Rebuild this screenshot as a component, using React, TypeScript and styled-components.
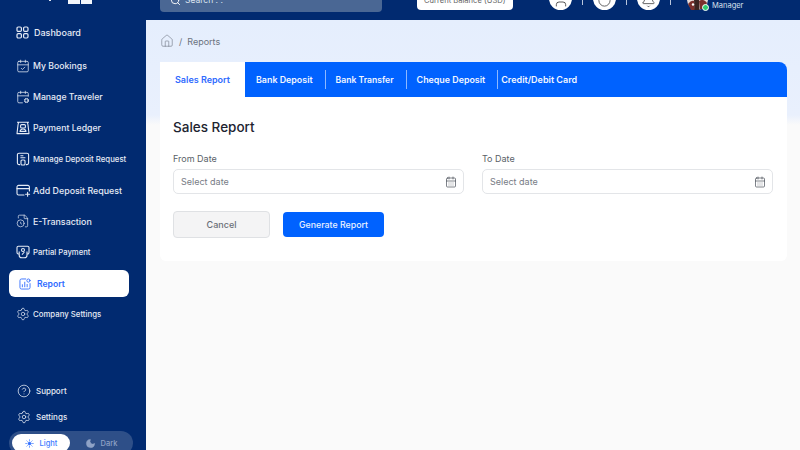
import React from "react";
import styled, { createGlobalStyle } from "styled-components";
import {
  Bell,
  CalendarCheck,
  CalendarCog,
  CalendarDays,
  CircleHelp,
  FileClock,
  Home,
  Moon,
  Search,
  Settings,
  Sun,
  User,
  RotateCw,
} from "lucide-react";

const navy = "#012a70";
const blue = "#0062ff";

const GlobalStyle = createGlobalStyle`
  html, body { margin: 0; padding: 0; height: 450px; overflow: hidden; }
  body { font-family: Inter, "Liberation Sans", sans-serif; background: #fafafa; }
  * { box-sizing: border-box; }
`;

const DashboardIcon = () => (
  <svg width="13" height="13" viewBox="0 0 13 13" fill="none" stroke="currentColor" strokeWidth="1.2">
    <rect x="1" y="1" width="4.4" height="4.4" rx="1.2" />
    <rect x="7.6" y="1" width="4.4" height="4.4" rx="1.2" />
    <rect x="1" y="7.6" width="4.4" height="4.4" rx="1.2" />
    <rect x="7.6" y="7.6" width="4.4" height="4.4" rx="1.2" />
  </svg>
);

const LedgerIcon = () => (
  <svg width="14" height="14" viewBox="0 0 14 14" fill="none" stroke="currentColor" strokeWidth="1.1" strokeLinejoin="round">
    <path d="M1 1.2h12M2.6 1.2 2 4 1 12.6h12L12 4l-.6-2.8" />
    <rect x="4.6" y="3.6" width="4.8" height="3.4" rx="1" />
    <path d="M4 10.4c.4-1.8 1.6-2.4 3-2.4s2.6.6 3 2.4z" />
  </svg>
);

const DepositIcon = () => (
  <svg width="14" height="14" viewBox="0 0 14 14" fill="none" stroke="currentColor" strokeWidth="1.1" strokeLinejoin="round">
    <path d="M4 12.6H3a1.6 1.6 0 0 1-1.6-1.6V2.8A1.6 1.6 0 0 1 3 1.2h8a1.6 1.6 0 0 1 1.6 1.6V11a1.6 1.6 0 0 1-1.6 1.6h-1" />
    <path d="M4.4 3.8h3M4.4 5.8h5" />
    <rect x="5" y="8" width="4" height="5" rx="1" />
  </svg>
);

const AddCardIcon = () => (
  <svg width="15" height="13" viewBox="0 0 15 13" fill="none" stroke="currentColor" strokeWidth="1.1" strokeLinecap="round">
    <path d="M8 11H2.6A1.6 1.6 0 0 1 1 9.4V3a1.6 1.6 0 0 1 1.6-1.6h9.2A1.6 1.6 0 0 1 13.4 3v4" />
    <path d="M1 4.6h12.4M11.6 8.2v4M9.6 10.2h4" />
  </svg>
);

const PartialIcon = () => (
  <svg width="14" height="14" viewBox="0 0 14 14" fill="none" stroke="currentColor" strokeWidth="1.1" strokeLinejoin="round">
    <path d="M3 9H2.4A1.4 1.4 0 0 1 1 7.6V2.6a1.4 1.4 0 0 1 1.4-1.4h9.2A1.4 1.4 0 0 1 13 2.6v5A1.4 1.4 0 0 1 11.6 9H11" />
    <path d="M3.2 6.6v3.6c0 1.5 1.2 2.6 2.6 2.6h2.6c1.4 0 2.6-1.1 2.6-2.6V6.6" />
    <circle cx="7" cy="5" r="1.5" />
    <path d="M6 9.6 8.4 7" />
  </svg>
);

const ReportIcon = () => (
  <svg width="12" height="12" viewBox="0 0 15 15" fill="none" stroke="currentColor" strokeWidth="1.1" strokeLinecap="round">
    <path d="M8.4 1.2H3.2a2 2 0 0 0-2 2v8.6a2 2 0 0 0 2 2h8.6a2 2 0 0 0 2-2V7" />
    <circle cx="11.8" cy="3.2" r="2" />
    <path d="M4.2 11V8.4M7.2 11V5.2M10.2 11V8" />
  </svg>
);

const AvatarPhoto = () => (
  <svg width="21" height="21" viewBox="0 0 21 21">
    <circle cx="10.5" cy="10.5" r="10.5" fill="#e9dcd8" />
    <path d="M1 15c2-3 5-4 6-3l1 9H4zM12 12c3-2 6-1 8 2l-3 6h-4z" fill="#7a2f2c" />
    <path d="M7 11c1-2 4-2 5 0l.5 10h-5z" fill="#3a2422" />
    <circle cx="6" cy="15.5" r="1.2" fill="#fff" />
  </svg>
);

const Page = styled.div`
  display: grid;
  grid-template-columns: 146px 1fr;
  grid-template-rows: 20px 1fr;
  width: 800px;
  height: 450px;
  overflow: hidden;
`;

const Sidebar = styled.aside`
  grid-row: 1 / 3;
  display: flex;
  flex-direction: column;
  background: ${navy};
  color: #e6ebf5;
  overflow: hidden;
`;

const LogoRow = styled.div`
  display: flex;
  align-items: flex-start;
  height: 17px;
  padding-left: 49px;
  gap: 17px;
`;

const LogoDot = styled.span`
  width: 2px;
  height: 1px;
  background: #dfe6f3;
`;

const LogoMark = styled.div`
  display: flex;
  gap: 1px;
  width: 24px;
  height: 4px;
  & > span {
    flex: 1;
    background: #f2f5fb;
  }
`;

const Nav = styled.nav`
  display: flex;
  flex-direction: column;
`;

const NavItem = styled.div<{ $first?: boolean; $size?: number; $gap?: number }>`
  display: flex;
  align-items: center;
  height: ${({ $first }) => ($first ? 30 : 31)}px;
  margin-bottom: ${({ $first }) => ($first ? 3.5 : 0)}px;
  padding-left: 16px;
  gap: ${({ $gap }) => $gap ?? 3}px;
  font-size: ${({ $size }) => $size ?? 8.7}px;
  font-weight: 500;
  white-space: nowrap;
  & > svg {
    flex: none;
  }
`;

const ActiveItem = styled.div`
  display: flex;
  align-items: center;
  height: 27px;
  margin: 2.5px 17px 1.5px 9px;
  padding-left: 10px;
  gap: 6px;
  border-radius: 6px;
  background: #fff;
  color: #2f6bff;
  font-size: 8.6px;
  font-weight: 600;
`;

const SidebarFooter = styled.div`
  display: flex;
  flex-direction: column;
  margin-top: auto;
`;

const FooterItem = styled.div`
  display: flex;
  align-items: center;
  gap: 5px;
  height: 26px;
  padding-left: 17px;
  font-size: 8px;
  font-weight: 500;
`;

const ThemeToggle = styled.div`
  display: flex;
  align-items: center;
  width: 124px;
  height: 24px;
  margin: 1px 0 -5px 9px;
  padding-left: 3px;
  border-radius: 12px;
  background: #2e4f88;
`;

const ThemeOption = styled.div<{ $on?: boolean }>`
  display: flex;
  align-items: center;
  justify-content: center;
  gap: ${({ $on }) => ($on ? 6 : 5)}px;
  width: ${({ $on }) => ($on ? 58 : 62)}px;
  height: 18px;
  border-radius: 9px;
  background: ${({ $on }) => ($on ? "#fff" : "transparent")};
  color: ${({ $on }) => ($on ? "#3d7bff" : "#8ea2c6")};
  font-size: 7.5px;
  font-weight: 500;
`;

const Header = styled.header`
  display: flex;
  align-items: flex-end;
  background: ${navy};
  padding: 0 0 8px 14px;
`;

const SearchBox = styled.div`
  display: flex;
  align-items: center;
  gap: 4px;
  width: 222px;
  height: 24px;
  padding-left: 10px;
  border-radius: 4px;
  background: #4a6794;
  color: #dce4f0;
  font-size: 8.5px;
`;

const Balance = styled.div`
  display: flex;
  align-items: center;
  width: 96px;
  height: 20px;
  margin: 0 0 2px 35px;
  padding-left: 7px;
  border-radius: 4px;
  background: #fff;
  color: #666;
  font-size: 7.6px;
  white-space: nowrap;
`;

const HeaderIcons = styled.div`
  display: flex;
  align-items: flex-end;
  margin: 0 0 2px 36px;
`;

const RoundIcon = styled.div`
  display: flex;
  align-items: flex-end;
  justify-content: center;
  width: 23px;
  height: 23px;
  padding-bottom: 2px;
  border-radius: 50%;
  background: #fff;
  color: #333;
`;

const Divider = styled.span`
  width: 1px;
  height: 8px;
  margin: 0 10px 5px;
  background: #b9c6dc;
`;

const Profile = styled.div`
  display: flex;
  align-items: flex-end;
  gap: 4px;
  margin-left: 6px;
  color: #d8e0ee;
  font-size: 7.5px;
`;

const Avatar = styled.div`
  position: relative;
  width: 21px;
  height: 21px;
  margin-bottom: 2px;
  border-radius: 50%;
  & > svg {
    display: block;
  }
`;

const StatusDot = styled.span`
  position: absolute;
  right: -1px;
  bottom: -1px;
  width: 7px;
  height: 7px;
  border: 1px solid #fff;
  border-radius: 50%;
  background: #2ecc71;
`;

const ManagerLabel = styled.span`
  line-height: 12px;
`;

const Main = styled.main`
  display: flex;
  flex-direction: column;
  padding: 0 13px 0 14px;
  background: linear-gradient(180deg, #e5eefd 0, #e9f0fd 95px, #fafafa 105px);
`;

const Breadcrumb = styled.div`
  display: flex;
  align-items: center;
  gap: 5px;
  height: 42px;
  color: #6b7280;
  font-size: 9px;
`;

const Tabs = styled.div`
  display: flex;
  align-items: center;
  height: 35px;
  background: ${blue};
  border-radius: 0 8px 0 0;
  overflow: hidden;
`;

const ActiveTab = styled.div`
  display: flex;
  align-items: center;
  justify-content: center;
  width: 85px;
  height: 100%;
  background: #fff;
  color: #2f6bff;
  font-size: 9px;
  font-weight: 600;
`;

const Tab = styled.div<{ $divided?: boolean; $left: number; $size: number }>`
  display: flex;
  align-items: center;
  height: 19px;
  padding: 0 12px 0 ${({ $left }) => $left}px;
  border-right: ${({ $divided }) => ($divided ? "1px solid #8db8ff" : "none")};
  color: #f2f6ff;
  font-size: ${({ $size }) => $size}px;
  font-weight: 600;
  white-space: nowrap;
`;

const Card = styled.section`
  display: flex;
  flex-direction: column;
  height: 164px;
  padding: 21px 14px 0 13px;
  background: #fff;
  border-radius: 0 0 6px 6px;
`;

const Title = styled.h2`
  margin: 0 0 17px;
  color: #1d2430;
  font-size: 13.5px;
  line-height: 18px;
  font-weight: 500;
`;

const Fields = styled.div`
  display: grid;
  grid-template-columns: 1fr 1fr;
  gap: 18px;
`;

const Field = styled.label`
  display: flex;
  flex-direction: column;
  gap: 4px;
  color: #5a5f68;
  font-size: 9px;
  line-height: 12px;
`;

const DateInput = styled.div`
  display: flex;
  align-items: center;
  justify-content: space-between;
  height: 25px;
  padding: 0 6px 0 7px;
  border: 1px solid #e3e5e8;
  border-radius: 5px;
  color: #777c85;
  font-size: 9px;
  & > svg {
    color: #484e57;
  }
`;

const Actions = styled.div`
  display: flex;
  align-items: center;
  gap: 13px;
  margin-top: 17px;
`;

const CancelButton = styled.button`
  width: 97px;
  height: 27px;
  border: 1px solid #dfe1e4;
  border-radius: 4px;
  background: #f4f4f5;
  color: #6a6f77;
  font: 500 9px Inter, "Liberation Sans", sans-serif;
`;

const PrimaryButton = styled.button`
  width: 101px;
  height: 25px;
  border: 0;
  border-radius: 4px;
  background: ${blue};
  color: #eaf1ff;
  font: 500 8.8px Inter, "Liberation Sans", sans-serif;
`;

const navRows = [
  { label: "My Bookings", icon: <CalendarCheck size={14} strokeWidth={1.3} />, size: 8.7 },
  { label: "Manage Traveler", icon: <CalendarCog size={14} strokeWidth={1.3} />, size: 8.7 },
  { label: "Payment Ledger", icon: <LedgerIcon />, size: 8.7 },
  { label: "Manage Deposit Request", icon: <DepositIcon />, size: 7.8 },
  { label: "Add Deposit Request", icon: <AddCardIcon />, size: 8.9, gap: 2 },
  { label: "E-Transaction", icon: <FileClock size={14} strokeWidth={1.2} />, size: 8.9 },
  { label: "Partial Payment", icon: <PartialIcon />, size: 7.7 },
];

const tabs = [
  { label: "Bank Deposit", left: 11, size: 8.9 },
  { label: "Bank Transfer", left: 10, size: 8.6 },
  { label: "Cheque Deposit", left: 10, size: 8.9 },
];

export default function App() {
  return (
    <Page>
      <GlobalStyle />
      <Sidebar>
        <LogoRow>
          <LogoDot />
          <LogoMark>
            <span />
            <span />
          </LogoMark>
        </LogoRow>
        <Nav>
          <NavItem $first $size={9} $gap={5}>
            <DashboardIcon />
            Dashboard
          </NavItem>
          {navRows.map((row) => (
            <NavItem key={row.label} $size={row.size} $gap={row.gap}>
              {row.icon}
              {row.label}
            </NavItem>
          ))}
          <ActiveItem>
            <ReportIcon />
            Report
          </ActiveItem>
          <NavItem $size={7.8}>
            <Settings size={14} strokeWidth={1.2} />
            Company Settings
          </NavItem>
        </Nav>
        <SidebarFooter>
          <FooterItem>
            <CircleHelp size={14} strokeWidth={1.3} />
            Support
          </FooterItem>
          <FooterItem>
            <Settings size={14} strokeWidth={1.3} />
            Settings
          </FooterItem>
          <ThemeToggle>
            <ThemeOption $on>
              <Sun size={9} fill="#2f6bff" strokeWidth={2} />
              Light
            </ThemeOption>
            <ThemeOption>
              <Moon size={11} fill="#8ea2c6" strokeWidth={1} />
              Dark
            </ThemeOption>
          </ThemeToggle>
        </SidebarFooter>
      </Sidebar>

      <Header>
        <SearchBox>
          <Search size={11} strokeWidth={2} color="#fff" />
          Search . .
        </SearchBox>
        <Balance>Current Balance (USD)</Balance>
        <HeaderIcons>
          <RoundIcon>
            <User size={16} strokeWidth={1.2} />
          </RoundIcon>
          <Divider />
          <RoundIcon>
            <RotateCw size={15} strokeWidth={1.2} />
          </RoundIcon>
          <Divider />
          <RoundIcon>
            <Bell size={15} strokeWidth={1.2} />
          </RoundIcon>
          <Divider />
        </HeaderIcons>
        <Profile>
          <Avatar>
            <AvatarPhoto />
            <StatusDot />
          </Avatar>
          <ManagerLabel>Manager</ManagerLabel>
        </Profile>
      </Header>

      <Main>
        <Breadcrumb>
          <Home size={14} strokeWidth={1} />
          <span>/</span>
          <span>Reports</span>
        </Breadcrumb>
        <Tabs>
          <ActiveTab>Sales Report</ActiveTab>
          {tabs.map((tab) => (
            <Tab key={tab.label} $divided $left={tab.left} $size={tab.size}>
              {tab.label}
            </Tab>
          ))}
          <Tab $left={3} $size={9}>
            Credit/Debit Card
          </Tab>
        </Tabs>
        <Card>
          <Title>Sales Report</Title>
          <Fields>
            <Field>
              From Date
              <DateInput>
                Select date
                <CalendarDays size={12} strokeWidth={1.4} />
              </DateInput>
            </Field>
            <Field>
              To Date
              <DateInput>
                Select date
                <CalendarDays size={12} strokeWidth={1.4} />
              </DateInput>
            </Field>
          </Fields>
          <Actions>
            <CancelButton>Cancel</CancelButton>
            <PrimaryButton>Generate Report</PrimaryButton>
          </Actions>
        </Card>
      </Main>
    </Page>
  );
}
